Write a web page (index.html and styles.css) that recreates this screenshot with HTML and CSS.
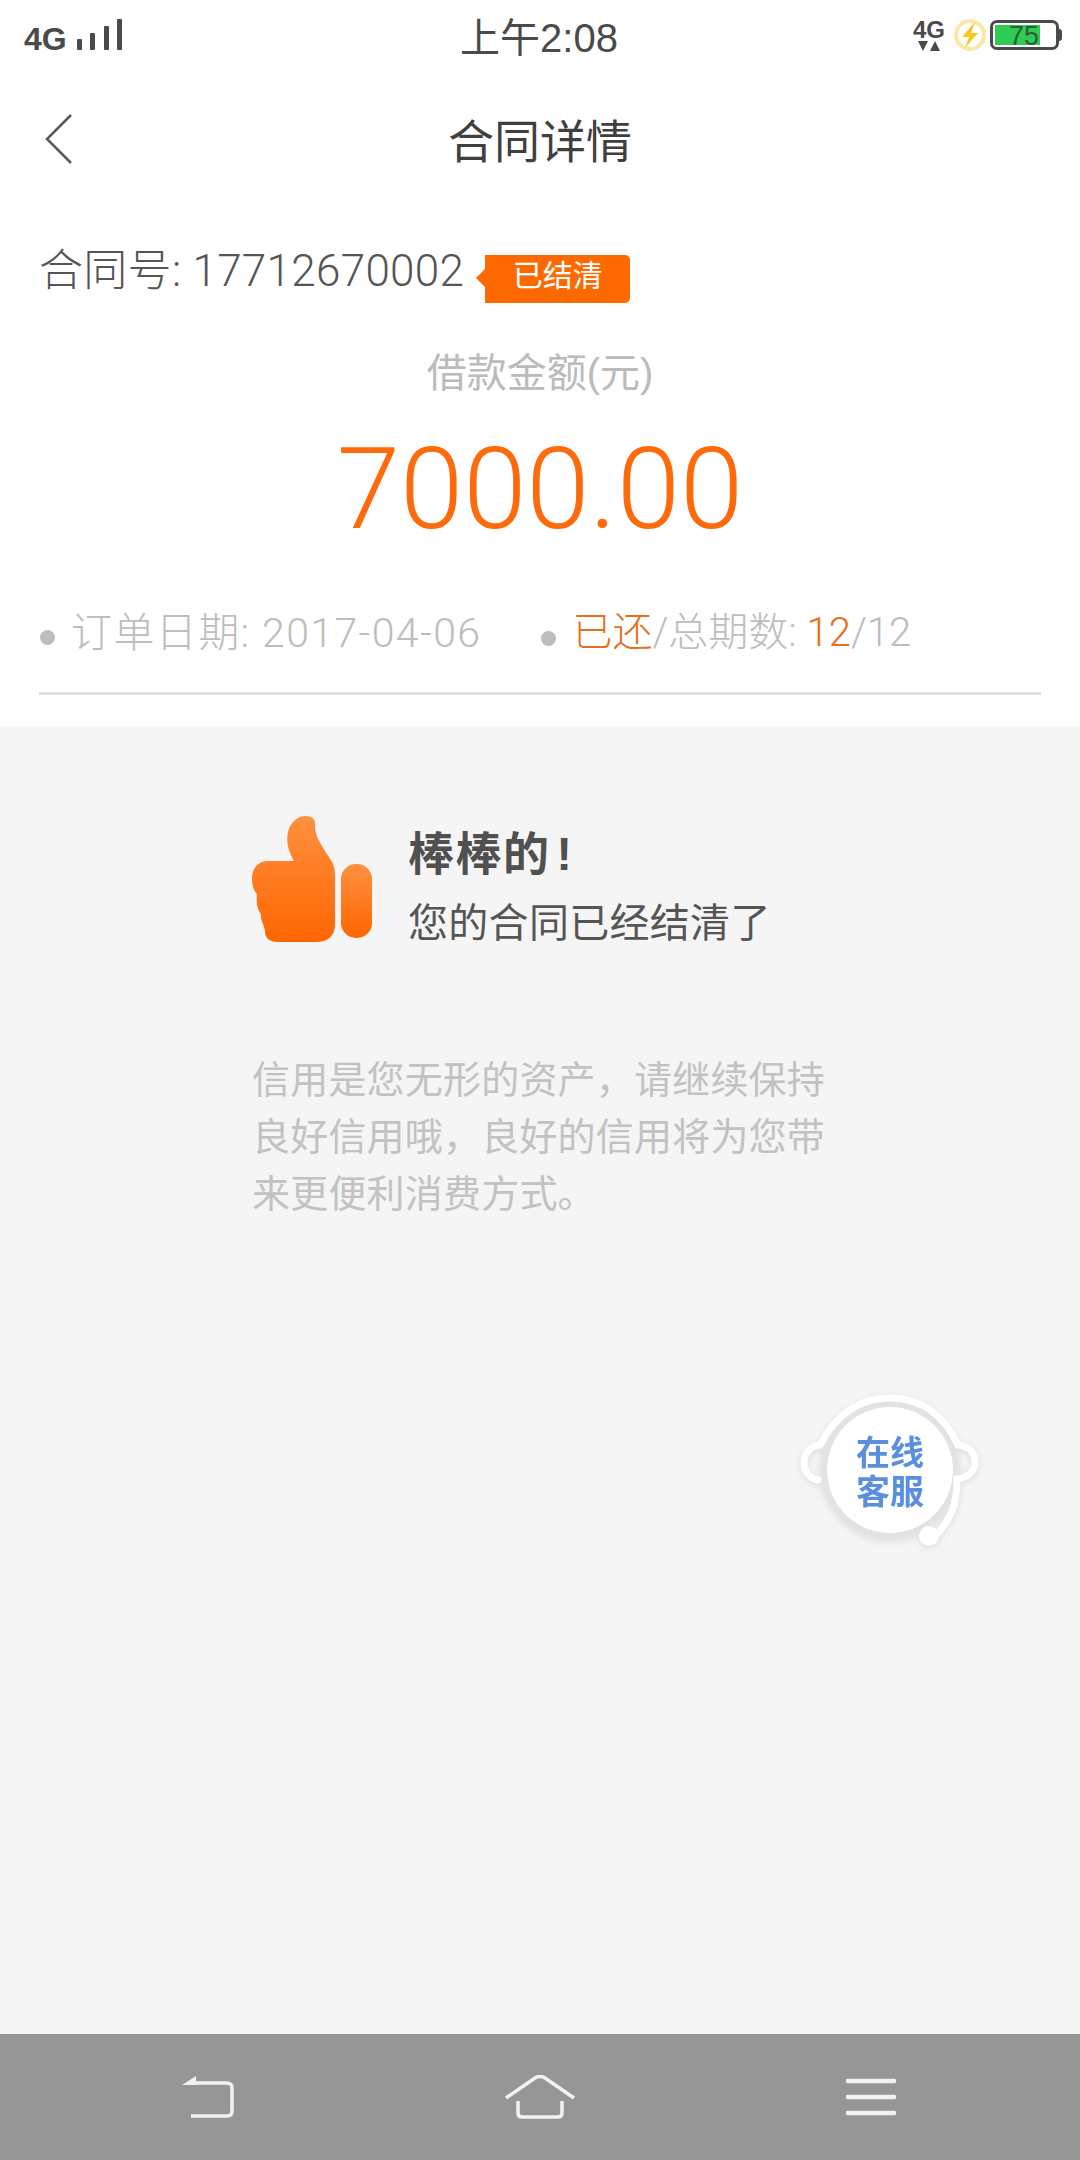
FILE: index.html
```html
<!DOCTYPE html>
<html lang="zh-CN">

<head>
    <meta charset="UTF-8">
    <meta name="viewport" content="width=device-width, initial-scale=1.0">
    <title>合同详情</title>
    <link rel="stylesheet" href="styles.css">
</head>

<body>
    <div class="page">

        <!-- Phone status bar -->
        <div class="status-bar">
            <div class="status-left">
                <span class="net">4G</span>
                <svg class="signal" width="46" height="32" viewBox="0 0 46 32">
                    <rect x="0" y="20" width="5" height="11" rx="1" />
                    <rect x="13" y="14" width="5" height="17" rx="1" />
                    <rect x="27" y="7" width="5" height="24" rx="1" />
                    <rect x="40" y="0" width="5" height="31" rx="1" />
                </svg>
            </div>
            <div class="status-time">上午2:08</div>
            <div class="status-right">
                <div class="net-small">
                    <span class="net-small-label">4G</span>
                    <svg width="22" height="11" viewBox="0 0 22 11">
                        <polygon points="0,0 10,0 5,10" />
                        <polygon points="12,10 22,10 17,0" />
                    </svg>
                </div>
                <svg class="bolt" width="34" height="36" viewBox="0 0 34 36">
                    <circle cx="17" cy="18" r="14" fill="none" stroke="#fbe7a6" stroke-width="4" />
                    <polygon points="22,5 9,20 16,20 12,31 25,16 18,16" fill="#f9c81e" />
                </svg>
                <div class="battery">
                    <div class="battery-fill"></div>
                    <span class="battery-num">75</span>
                </div>
                <div class="battery-nub"></div>
            </div>
        </div>

        <!-- Title bar -->
        <div class="title-bar">
            <svg class="back" width="28" height="50" viewBox="0 0 28 50">
                <polyline points="26,1 2,25 26,49" />
            </svg>
            <h1>合同详情</h1>
        </div>

        <!-- Contract summary -->
        <div class="summary">
            <div class="contract-row">
                <span class="contract-no">合同号: 17712670002</span>
                <span class="tag">已结清</span>
            </div>
            <div class="amount-label">借款金额(元)</div>
            <div class="amount">7000.00</div>
            <div class="meta-row">
                <span class="meta meta-date">订单日期: 2017-04-06</span>
                <span class="meta"><em>已还</em>/总期数: <em>12</em>/12</span>
            </div>
            <div class="divider"></div>
        </div>

        <!-- Settled message -->
        <div class="content">
            <div class="result">
                <svg class="thumb" width="120" height="126" viewBox="22 26 120 126">
                    <defs>
                        <linearGradient id="thumbFill" x1="0" y1="0" x2="0" y2="1">
                            <stop offset="0" stop-color="#ff9040" />
                            <stop offset="1" stop-color="#ff6600" />
                        </linearGradient>
                    </defs>
                    <path fill="url(#thumbFill)" d="M64 71 C58 60 56 52 58 42 C60 33 67 26 75 26 C83 26 86 30 85 36 C85 46 90 52 95 61 C100 69 105 74 105 84 L105 134 C105 146 98 152 86 152 L48 152 C39 152 35 148 35 141 C34 134 30 130 31 124 C27 119 26 112 27 104 C23 100 22 94 22 87 C23 77 29 71 38 71 Z" />
                    <rect x="111" y="74" width="31" height="74" rx="15" fill="url(#thumbFill)" />
                </svg>
                <div class="result-text">
                    <div class="result-title">棒棒的<span class="bang">!</span></div>
                    <div class="result-sub">您的合同已经结清了</div>
                </div>
            </div>
            <p class="tip">信用是您无形的资产，请继续保持<br>良好信用哦，良好的信用将为您带<br>来更便利消费方式。</p>

            <!-- Floating customer service button -->
            <div class="service">
                <svg width="190" height="180" viewBox="0 0 190 180">
                    <defs>
                        <filter id="soft" x="-20%" y="-20%" width="140%" height="140%">
                            <feGaussianBlur stdDeviation="2.5" />
                        </filter>
                    </defs>
                    <circle cx="95" cy="85" r="66" fill="none" stroke="#e2e2e2" stroke-width="6" filter="url(#soft)" />
                    <path class="service-line" d="M23 95 C4 92 4 62 25 60 C42 28 66 13 95 13 C124 13 148 28 163 60 C186 62 186 92 162 94 C162 118 156 134 143 148" />
                    <circle cx="95" cy="85" r="63" fill="#fff" />
                    <circle cx="134" cy="151" r="10" fill="#fff" />
                </svg>
                <div class="service-text">在线<br>客服</div>
            </div>
        </div>

        <!-- Android nav bar -->
        <div class="nav-bar">
            <svg width="52" height="42" viewBox="0 0 52 42">
                <path class="nav-line" d="M6 7 H45 Q50 7 50 12 V35 Q50 40 45 40 H9" />
                <polygon class="nav-fill" points="0,9 14,0 14,9" />
            </svg>
            <svg width="72" height="44" viewBox="0 0 72 44">
                <path class="nav-line" d="M2 23 L31 3 Q36 0 41 3 L70 23" />
                <path class="nav-line" d="M14 26 V38 Q14 42 18 42 H54 Q58 42 58 38 V26" />
            </svg>
            <svg width="50" height="38" viewBox="0 0 50 38">
                <path class="nav-line round" d="M2 3 H48 M2 19 H48 M2 35 H48" />
            </svg>
        </div>

    </div>
</body>

</html>
```

FILE: styles.css
```css
* {
    box-sizing: border-box;
}

body {
    margin: 0;
    font-family: "Liberation Sans", "Noto Sans CJK SC", sans-serif;
    background: #fff;
}

.page {
    width: 1080px;
    height: 2160px;
    display: flex;
    flex-direction: column;
    overflow: hidden;
}

/* Status bar */
.status-bar {
    height: 70px;
    padding: 0 18px;
    display: grid;
    grid-template-columns: 1fr auto 1fr;
    align-items: center;
    color: #4a4a4a;
}

.status-left {
    display: flex;
    align-items: flex-end;
    gap: 10px;
    margin-left: 6px;
}

.net {
    font-size: 32px;
    font-weight: bold;
    line-height: 24px;
}

.signal {
    fill: #4a4a4a;
}

.status-time {
    font-size: 40px;
    line-height: 50px;
    margin: 5px 2px 0 0;
}

.status-right {
    display: flex;
    justify-content: flex-end;
    align-items: center;
}

.net-small {
    display: flex;
    flex-direction: column;
    align-items: center;
    margin-right: 8px;
    fill: #4a4a4a;
}

.net-small-label {
    font-size: 24px;
    font-weight: bold;
    line-height: 22px;
}

.bolt {
    margin-right: 3px;
}

.battery {
    position: relative;
    width: 69px;
    height: 30px;
    border: 3px solid #4a4a4a;
    border-radius: 7px;
}

.battery-fill {
    height: 20px;
    width: 45px;
    margin: 2px 0 0 2px;
    background: #2ecc52;
}

.battery-num {
    position: absolute;
    top: -1px;
    left: 16px;
    font-size: 27px;
    line-height: 28px;
    color: #2c5c3a;
}

.battery-nub {
    width: 3px;
    height: 12px;
    background: #4a4a4a;
    border-radius: 0 3px 3px 0;
}

/* Title bar */
.title-bar {
    height: 142px;
    display: flex;
    align-items: center;
    justify-content: center;
    position: relative;
}

.title-bar h1 {
    margin: 0 0 6px;
    font-size: 46px;
    font-weight: normal;
    color: #3f3f3f;
}

.back {
    position: absolute;
    left: 45px;
    top: 44px;
    fill: none;
    stroke: #595959;
    stroke-width: 2.5;
}

/* Summary */
.summary {
    height: 514px;
    padding: 0 39px;
    display: flex;
    flex-direction: column;
}

.contract-row {
    height: 60px;
    margin-top: 25px;
    display: flex;
    align-items: center;
}

.contract-no {
    font-family: Roboto, "Noto Sans CJK SC", sans-serif;
    font-weight: 300;
    font-size: 44px;
    letter-spacing: 0.3px;
    color: #555;
    white-space: nowrap;
}

.tag {
    position: relative;
    margin-left: 21px;
    margin-top: 24px;
    width: 145px;
    height: 48px;
    background: #ff6a00;
    color: #fff;
    font-size: 30px;
    line-height: 42px;
    text-align: center;
    border-radius: 0 5px 5px 0;
}

.tag::before {
    content: "";
    position: absolute;
    left: -9px;
    top: 14px;
    border-top: 9px solid transparent;
    border-bottom: 9px solid transparent;
    border-right: 9px solid #ff6a00;
}

.amount-label {
    margin-top: 51px;
    text-align: center;
    font-size: 40px;
    line-height: 50px;
    color: #bbb;
}

.amount {
    margin-top: 26px;
    text-align: center;
    font-family: Roboto, sans-serif;
    font-weight: 300;
    font-size: 114px;
    line-height: 130px;
    color: #ff6a0a;
}

.meta-row {
    margin-top: 50px;
    display: flex;
    align-items: center;
    height: 50px;
}

.meta {
    position: relative;
    padding-left: 32px;
    font-family: Roboto, "Noto Sans CJK SC", sans-serif;
    font-weight: 300;
    font-size: 40px;
    color: #bdbdbd;
    white-space: nowrap;
}

.meta::before {
    content: "";
    position: absolute;
    left: 1px;
    top: 31px;
    width: 15px;
    height: 15px;
    border-radius: 50%;
    background: #bdbdbd;
}

.meta-date {
    margin-right: 59px;
    font-size: 41px;
    letter-spacing: 1.4px;
}

.meta em {
    font-style: normal;
    color: #e56f1d;
}

.divider {
    margin-top: 38px;
    height: 3px;
    background: #e0e0e0;
}

/* Grey content area */
.content {
    flex: 1;
    position: relative;
    background: #f5f5f5;
    padding: 90px 0 0 252px;
}

.result {
    display: flex;
    gap: 36px;
}

.result-text {
    padding-top: 7px;
}

.result-title {
    font-size: 46px;
    font-weight: bold;
    line-height: 62px;
    letter-spacing: 1.5px;
    color: #505050;
}

.bang {
    margin-left: 6px;
}

.result-sub {
    margin-top: 13px;
    font-size: 40px;
    line-height: 50px;
    letter-spacing: 0.3px;
    color: #555;
}

.tip {
    margin: 104px 0 0;
    font-size: 38px;
    line-height: 57px;
    letter-spacing: 0.2px;
    color: #c2c2c2;
}

.service {
    position: absolute;
    left: 795px;
    top: 659px;
    width: 190px;
    height: 180px;
    filter: drop-shadow(0 2px 3px rgba(0, 0, 0, 0.1));
}

.service-line {
    fill: none;
    stroke: #fff;
    stroke-width: 7;
    stroke-linecap: round;
}

.service-text {
    position: absolute;
    left: 0;
    right: 0;
    top: 49px;
    text-align: center;
    font-size: 34px;
    font-weight: bold;
    line-height: 39px;
    color: #5a8fe0;
}

/* Nav bar */
.nav-bar {
    height: 126px;
    background: #969696;
    display: flex;
    align-items: center;
    justify-content: space-between;
    padding: 0 184px 0 182px;
}

.nav-line {
    fill: none;
    stroke: #f2f2f2;
    stroke-width: 3.5;
}

.nav-line.round {
    stroke-width: 4.5;
    stroke-linecap: round;
}

.nav-fill {
    fill: #f2f2f2;
}
```
